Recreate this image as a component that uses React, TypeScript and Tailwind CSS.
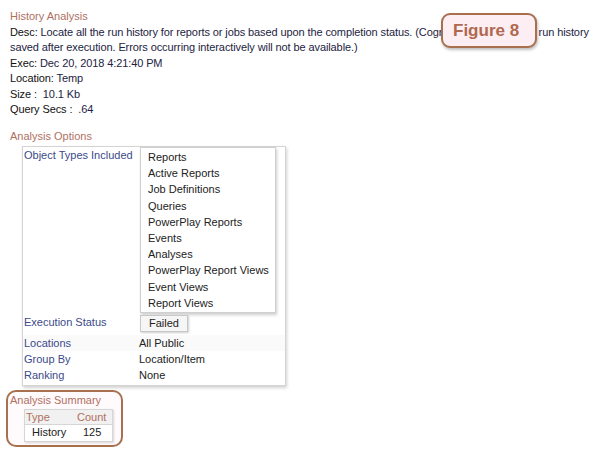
import React from 'react';

const objectTypes = [
  'Reports',
  'Active Reports',
  'Job Definitions',
  'Queries',
  'PowerPlay Reports',
  'Events',
  'Analyses',
  'PowerPlay Report Views',
  'Event Views',
  'Report Views',
];

const infoRows = [
  { label: 'Exec:', value: 'Dec 20, 2018 4:21:40 PM' },
  { label: 'Location:', value: 'Temp' },
  { label: 'Size :', value: ' 10.1 Kb' },
  { label: 'Query Secs :', value: ' .64' },
];

export default function App() {
  return (
    <div className="relative w-[600px] h-[462px] overflow-hidden bg-white font-['Liberation_Sans',Arial,sans-serif] text-[11px] text-[#23233f]">
      <div className="pl-[10px] pt-[9px] leading-[15.5px]">
        <div className="text-[#b0705f]">History Analysis</div>
        <div className="whitespace-nowrap tracking-[-0.1px]">
          <span className="text-[#111]">Desc:</span> Locate all the run history for reports or jobs based upon the completion status. (Cognos only keeps the <span className="ml-[7px]">run history</span>
          <br />
          saved after execution. Errors occurring interactively will not be available.)
        </div>
        {infoRows.map((r) => (
          <div key={r.label} className="whitespace-pre tracking-[-0.1px]">
            <span className="text-[#111]">{r.label}</span> {r.value}
          </div>
        ))}

        {/* 분석 옵션 */}
        <div className="mt-[11px] text-[#b0705f]">Analysis Options</div>
        <div className="ml-[12px] mt-[2px] w-[264px] border border-[#d4d4d4] bg-white shadow-[1px_2px_3px_rgba(0,0,0,0.18)] pb-[2px] leading-[16px]">
          <div className="flex">
            <div className="w-[117px] pl-[1px] text-[#3b4a8a]">Object Types Included</div>
            <div className="w-[136px] border border-[#d0d0d0] bg-white pt-[1px] pb-[1px] pl-[7px] shadow-[1px_2px_3px_rgba(0,0,0,0.2)] text-[#222]">
              {objectTypes.map((t) => (
                <div key={t} className="h-[16.2px] whitespace-nowrap">{t}</div>
              ))}
            </div>
          </div>
          <div className="flex mt-[2px] items-center">
            <div className="w-[117px] pl-[1px] text-[#3b4a8a] -mt-[3px]">Execution Status</div>
            <div className="w-[48px] h-[17px] border border-[#c8c8c8] bg-[#f6f6f6] text-center leading-[15px] text-[#222] shadow-[1px_1px_2px_rgba(0,0,0,0.2)]">
              Failed
            </div>
          </div>
          <div className="flex mt-[3px] bg-[#fafafa]">
            <div className="w-[116px] pl-[1px] text-[#3b4a8a]">Locations</div>
            <div className="text-[#222]">All Public</div>
          </div>
          <div className="flex">
            <div className="w-[116px] pl-[1px] text-[#3b4a8a]">Group By</div>
            <div className="text-[#222]">Location/Item</div>
          </div>
          <div className="flex">
            <div className="w-[116px] pl-[1px] text-[#3b4a8a]">Ranking</div>
            <div className="text-[#222]">None</div>
          </div>
        </div>
      </div>

      {/* 요약 */}
      <div className="ml-[6px] mt-[4px] w-[117px] h-[57px] rounded-[10px] border-2 border-[#a8704f] bg-[#fffafc] pl-[2px] pt-[1px] leading-[15px]">
        <div className="text-[#b0705f]">Analysis Summary</div>
        <div className="ml-[14px] mt-[1px] w-[89px] border border-[#d6d6d6] shadow-[1px_1px_2px_rgba(0,0,0,0.15)]">
          <div className="flex h-[15px] bg-[#f1f1f1] border-b border-[#d6d6d6] text-[#b0705f]">
            <div className="w-[52px] pl-[1px]">Type</div>
            <div>Count</div>
          </div>
          <div className="flex h-[16px] bg-white text-[#222]">
            <div className="w-[52px] pl-[7px]">History</div>
            <div className="pl-[6px]">125</div>
          </div>
        </div>
      </div>

      {/* Figure 8 라벨 */}
      <div className="absolute left-[441px] top-[13px] w-[96px] h-[35px] rounded-[9px] border-2 border-[#a8704f] bg-[#fdeef3] pl-[10px] pt-[1px] leading-[29px] text-[17px] font-bold text-[#b0684e] shadow-[1px_2px_3px_rgba(0,0,0,0.25)]">
        Figure 8
      </div>
    </div>
  );
}
